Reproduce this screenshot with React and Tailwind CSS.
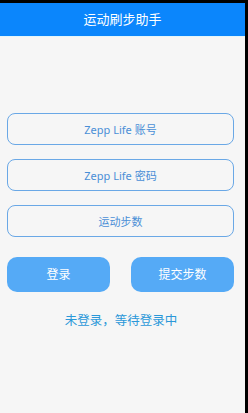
export default function App() {
  const fields = ['Zepp Life 账号', 'Zepp Life 密码', '运动步数']

  return (
    <div className="h-[413px] w-[248px] bg-black pt-[3px] pr-[3px]" style={{ fontFamily: '"Noto Sans", "Noto Sans CJK SC", sans-serif' }}>
      <div className="flex h-[410px] w-[245px] flex-col bg-[#f6f6f6]">
        <div className="flex h-[33px] items-center justify-center bg-[#0b86fc] text-[13px] text-white">
          运动刷步助手
        </div>
        <div className="h-px bg-[#e3f6fb]" />
        <div className="flex flex-col gap-[14px] px-[7px] pt-[76px]">
          {fields.map((f) => (
            <input
              key={f}
              placeholder={f}
              className="h-[32px] w-[227px] rounded-[8px] border border-[#6aa8e6] bg-[#f6f6f6] text-center text-[11px] outline-none placeholder:text-[#4a8fd6]"
            />
          ))}
        </div>
        <div className="flex justify-between px-[7px] pt-[20px] pr-[11px]">
          <button className="h-[35px] w-[103px] rounded-[10px] bg-[#55aaf6] text-[12px] text-white">登录</button>
          <button className="h-[35px] w-[103px] rounded-[10px] bg-[#55aaf6] text-[12px] text-white">提交步数</button>
        </div>
        <div className="pt-[20px] pr-[3px] text-center text-[12.5px] text-[#2a98d9]">未登录，等待登录中</div>
      </div>
    </div>
  )
}
